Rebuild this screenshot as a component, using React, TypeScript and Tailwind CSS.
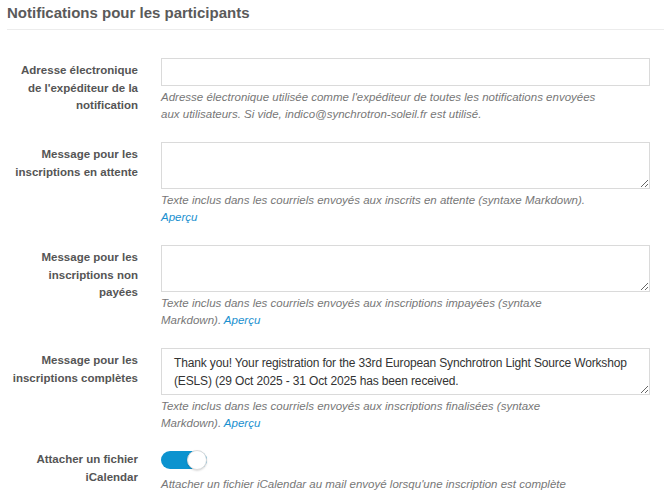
import React from 'react';

type Row = {
  label: string;
  kind: 'input' | 'textarea' | 'toggle';
  value?: string;
  help: string;
  preview?: boolean;
};

const rows: Row[] = [
  {
    label: "Adresse électronique de l'expéditeur de la notification",
    kind: 'input',
    help: "Adresse électronique utilisée comme l'expéditeur de toutes les notifications envoyées aux utilisateurs. Si vide, indico@synchrotron-soleil.fr est utilisé.",
  },
  {
    label: 'Message pour les inscriptions en attente',
    kind: 'textarea',
    help: 'Texte inclus dans les courriels envoyés aux inscrits en attente (syntaxe Markdown).',
    preview: true,
  },
  {
    label: 'Message pour les inscriptions non payées',
    kind: 'textarea',
    help: 'Texte inclus dans les courriels envoyés aux inscriptions impayées (syntaxe Markdown).',
    preview: true,
  },
  {
    label: 'Message pour les inscriptions complètes',
    kind: 'textarea',
    value:
      'Thank you! Your registration for the 33rd European Synchrotron Light Source Workshop (ESLS) (29 Oct 2025 - 31 Oct 2025 has been received.',
    help: 'Texte inclus dans les courriels envoyés aux inscriptions finalisées (syntaxe Markdown).',
    preview: true,
  },
  {
    label: 'Attacher un fichier iCalendar',
    kind: 'toggle',
    help: "Attacher un fichier iCalendar au mail envoyé lorsqu'une inscription est complète",
  },
];

export default function App() {
  return (
    <div className="w-[664px] h-[500px] overflow-hidden bg-white font-['Liberation_Sans',Arial,sans-serif]">
      {/* Section title */}
      <div className="pl-[7px]">
        <h2 className="pt-[4px] pb-[7px] text-[15px] leading-[18px] font-bold text-[#5a5a5a] border-b border-[#ececec]">
          Notifications pour les participants
        </h2>
      </div>

      <div className="pt-[28px] pl-[7px]">
        {rows.map((row, i) => (
          <FormRow key={i} row={row} />
        ))}
      </div>
    </div>
  );
}

function FormRow({ row }: { row: Row }) {
  return (
    <div className="flex gap-[23px] mb-[19px]">
      <label
        className={`w-[131px] shrink-0 text-right text-[11.5px] leading-[17.5px] font-bold text-[#555] ${
          row.kind === 'toggle' ? 'pt-0' : 'pt-[4px]'
        }`}
      >
        {row.label}
      </label>
      <div className="w-[489px]">
        {row.kind === 'input' && (
          <input
            type="text"
            className="block w-full h-[28px] border border-[#dadada] bg-white outline-none"
          />
        )}
        {row.kind === 'textarea' && (
          <textarea
            defaultValue={row.value}
            className="block w-full h-[47px] border border-[#dadada] bg-white outline-none resize-y px-[12px] pt-[5px] text-[12px] tracking-[-0.15px] leading-[18px] text-[#333]"
          />
        )}
        {row.kind === 'toggle' && (
          <div className="relative w-[46px] h-[18px] rounded-full bg-[#0c93cf] mb-[7px]">
            <div className="absolute right-0 top-[-1px] w-[20px] h-[20px] rounded-full bg-white border border-[#dcdcdc] shadow-[0_1px_2px_rgba(0,0,0,0.15)]" />
          </div>
        )}
        <p className="mt-[3px] max-w-[440px] text-[11.5px] leading-[17px] italic text-[#777]">
          {row.help}
          {row.preview && (
            <>
              {' '}
              <a className="text-[#1a90cf] cursor-pointer">Aperçu</a>
            </>
          )}
        </p>
      </div>
    </div>
  );
}
